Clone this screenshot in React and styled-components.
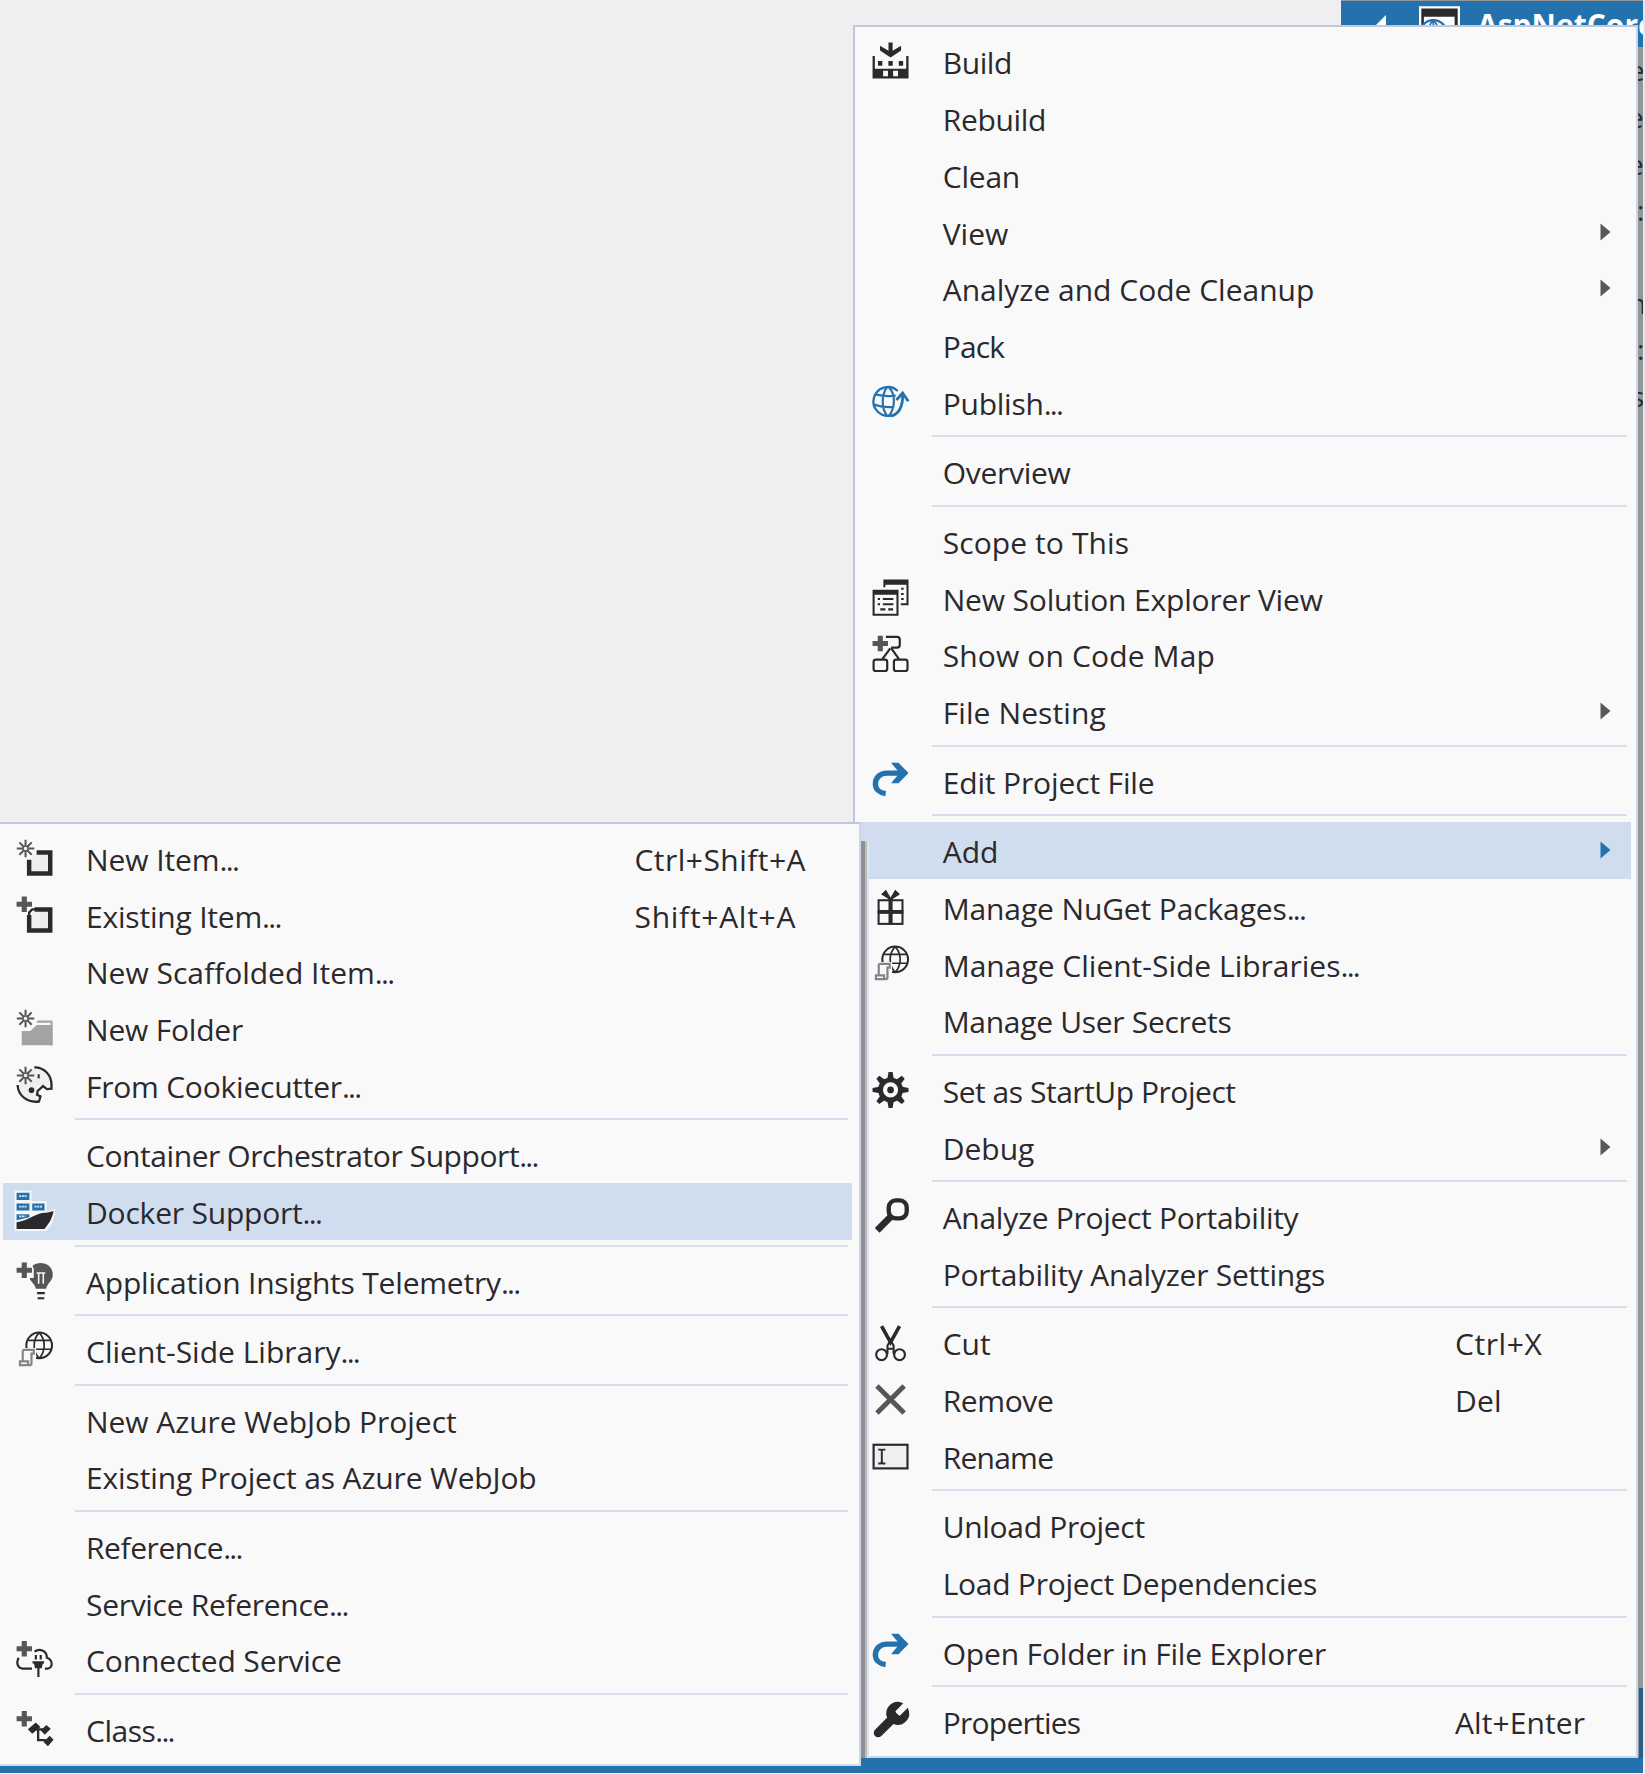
import React from "react";
import styled, { createGlobalStyle } from "styled-components";

const ROW = 56.75;
const INK = "#2b292c";
const GREY = "#565557";
const BLUE = "#2372ae";
const PANEL = "#f9f9fa";

const GlobalStyle = createGlobalStyle`
  * { box-sizing: border-box; }
  body { margin: 0; background: #fff; }
`;

const Desktop = styled.main`
  position: relative;
  width: 1645px;
  height: 1774px;
  overflow: hidden;
  background: #efeff1;
  font-family: "Open Sans", "Noto Sans", sans-serif;
  color: ${INK};
`;

const Explorer = styled.aside`
  position: absolute;
  left: 1341px;
  top: 0;
  width: 304px;
  height: 1757px;
  padding-top: 1px;
  background: #959596;
  border-right: 2px solid #e4e8ee;
  overflow: hidden;
`;

const ProjectRow = styled.div`
  display: flex;
  align-items: flex-start;
  height: 46px;
  padding-left: 29px;
  background: ${BLUE};
  color: #fff;
  font-size: 30px;
  font-weight: 700;
  line-height: 46px;
  white-space: nowrap;
`;

const ProjectName = styled.span`
  margin: 1px 0 0 17px;
`;

const Expander = styled.svg`
  flex: none;
  width: 14px;
  height: 14px;
  margin: 13px 32px 0 3px;
`;

const ProjectIcon = styled.svg`
  flex: none;
  width: 41px;
  height: 41px;
  margin-top: 4px;
`;

const TreeRow = styled.div`
  height: ${(p) => p.$h}px;
  padding-left: ${(p) => p.$indent}px;
  font-size: 28px;
  line-height: 47px;
  white-space: nowrap;
`;

const StatusBar = styled.footer`
  position: absolute;
  left: 0;
  top: 1757px;
  width: 1643px;
  height: 16px;
  background: ${BLUE};
`;

const StatusEdge = styled.div`
  position: absolute;
  left: 1639px;
  top: 1688px;
  width: 4px;
  height: 70px;
  background: #275f8c;
`;

const Menu = styled.nav`
  position: absolute;
  display: flex;
  flex-direction: column;
  background: ${PANEL};
  border: 2px solid #bdcadb;
`;

const ProjectMenu = styled(Menu)`
  left: 853px;
  top: 25px;
  width: 785px;
  height: 1733px;
  padding: 6.3px 5px 0 1px;
  border-right: 2px solid #cbd7e8;
  border-bottom-color: #cbd7e8;
`;

const AddMenu = styled(Menu)`
  left: 0;
  top: 822px;
  width: 861px;
  height: 944px;
  padding: 5.8px 7px 0 3px;
  border-left: 0;
  border-right: 2px solid #cbd7e8;
  border-bottom-color: #d5deea;
`;

const MenuShadow = styled.div`
  position: absolute;
  left: 860px;
  top: 841px;
  width: 9px;
  height: 917px;
  border-radius: 0 5px 0 0;
  background: linear-gradient(90deg, #8f8f90 0 5px, #b9bcc0 5px 7px, #dbe3ee 7px 9px);
`;

const Row = styled.div`
  display: flex;
  align-items: flex-start;
  flex: none;
  height: ${ROW}px;
  padding-left: ${(p) => (p.$sub ? 10.5 : 14.4)}px;
  background: ${(p) => (p.$active ? "#d0ddee" : "transparent")};
`;

const IconSlot = styled.span`
  flex: none;
  width: ${(p) => (p.$sub ? 72.5 : 72.3)}px;
  height: 41.1px;
  padding-top: 7.2px;
`;

const Glyph = styled.svg`
  display: block;
  width: 41.1px;
  height: 41.1px;
  overflow: visible;
`;

const Label = styled.span`
  flex: none;
  width: ${(p) => (p.$sub ? 548.5 : 512.3)}px;
  font-size: 30px;
  line-height: ${ROW + 4}px;
  letter-spacing: ${(p) => p.$track || 0}px;
  white-space: nowrap;
`;

const Dots = styled.span`
  letter-spacing: -1.7px;
`;

const Shortcut = styled.span`
  flex: 1;
  font-size: 30px;
  line-height: ${ROW + 4}px;
  letter-spacing: ${(p) => p.$track || 0}px;
  white-space: nowrap;
`;

const Arrow = styled.svg`
  flex: none;
  width: 11px;
  height: 18px;
  margin: 19px 20.5px 0 auto;
`;

const Divider = styled.hr`
  flex: none;
  height: 2px;
  margin: 4.75px 4px 6px ${(p) => (p.$sub ? 72 : 76)}px;
  border: 0;
  background: #d5dfee;
`;

const Plus = ({ y = 4 }) => (
  <path d={`M3 ${y - 3}h2v2h2v2H5v2H3v-2H1v-2h2z`} fill={GREY} />
);

const Spark = () => (
  <g stroke={GREY} strokeWidth="0.8">
    <path d="M4.5 1.1v2.3M4.5 5.6v2.3M1.1 4.5h2.3M5.6 4.5h2.3M2.1 2.1l1.6 1.6M5.3 5.3l1.6 1.6M6.9 2.1L5.3 3.7M3.7 5.3L2.1 6.9" />
    <circle cx="4.5" cy="4.5" r="1" fill="none" strokeWidth="0.6" />
  </g>
);

const redo = (
  <g fill="none" stroke={BLUE}>
    <path d="M13.2 5.1H6.6C3.8 5.1 2.1 7 2.1 9.3c0 2 1.6 3.5 4 3.8" strokeWidth="2.1" />
    <path d="M8.2 1.1h2.9L15 5.1l-3.9 4H8.2l3.3-4z" fill={BLUE} stroke="none" />
  </g>
);

const library = (
  <g fill="none">
    <circle cx="9.8" cy="6.4" r="5" stroke={INK} strokeWidth="0.8" />
    <path d="M5.5 4.4h8.6M4.8 7.9h10M9.8 1.4c-2.6 2.8-2.6 7.2 0 10M9.8 1.4c2.6 2.8 2.6 7.2 0 10" stroke={INK} strokeWidth="0.65" />
    <path d="M1.3 7.4h7.3v5H8v2.5H1.3z" fill={PANEL} />
    <path d="M3.4 12.6V8.7q0-.6.6-.6h3.7v1.5h-.9v3.7q0 .8-.8.8H2.3v-1.5h3.2v1" stroke="#858587" strokeWidth="0.85" />
  </g>
);

const ICONS = {
  build: (
    <g fill={INK}>
      <path d="M7.2 1h1.6v3.2L12.1 2.2v1.9L8 6.8 3.9 4.1V2.2l3.3 2z" />
      <path fillRule="evenodd" d="M1 6.2h.9v5h12.2v-5h.9V15H1zM5.1 12v2.1h1.9V12zM9 12v2.1h1.9V12z" />
      <path d="M3.1 8.2h1.7v1.8H3.1zM7.15 8.2h1.7v1.8h-1.7zM11.2 8.2h1.7v1.8h-1.7z" />
    </g>
  ),
  publish: (
    <g fill="none" stroke={BLUE} strokeWidth="0.9">
      <path d="M10.8 3.9A5.6 5.6 0 1 0 8.3 13.4" />
      <path d="M6.6 2.4C4.4 5.6 4.4 10.4 6.6 13.6M7.4 2.4c1.3 1.4 1.9 3.3 1.9 5.3 0 2.2-.6 4.3-1.9 5.9M2.2 5.2q3.5 1 7.8.5M1.6 9.2q4 1.3 7.8.9" strokeWidth="0.85" />
      <path d="M8 13.6c2.9-.4 4.9-3.3 4.7-8.4" strokeWidth="1.1" />
      <path d="M10.3 7.4L12.7 4.7 14.9 7.9" strokeWidth="1.1" />
    </g>
  ),
  solution: (
    <g fill={INK}>
      <path d="M5.2 1H15v10h-3v-.8h2.2V3H6v1h-.8z" />
      <path fillRule="evenodd" d="M1 5h10.1v10.1H1zM1.8 6.9v7.4h8.5V6.9z" />
      <path d="M3 8.2h.9v.8H3zM5 8.2h4.1v.8H5zM3 10.2h.9v.8H3zM5 10.2h4.1v.8H5zM4 12.2h2v.8H4zM7.1 12.2h1.9v.8H7.1zM12.1 4.2h1v.8h-1zM12.1 6.2h1V7h-1zM12.1 8.2h1V9h-1z" />
    </g>
  ),
  codemap: (
    <g>
      <Plus y={4.1} />
      <g fill="none" stroke={INK} strokeWidth="0.85">
        <path d="M6.2 1.5h4.3q1.1 0 1.1 1.1v2q0 1.1-1.1 1.1H8.2M7.9 6L4.8 10.2M8.3 6l3 4.2" />
        <rect x="1.4" y="10.4" width="5.3" height="4.4" rx="0.9" />
        <rect x="9.3" y="10.4" width="5.3" height="4.4" rx="0.9" />
      </g>
    </g>
  ),
  redo,
  gift: (
    <g fill="none" stroke={INK}>
      <rect x="3.35" y="5.55" width="9.3" height="9.2" strokeWidth="0.8" />
      <path d="M8 5v10" strokeWidth="1.6" />
      <path d="M3 10.1h10" strokeWidth="1.5" />
      <path d="M4.3 3.2l1.9-1.7L8 4.5l1.8-3 1.9 1.7L8.5 5.3h-1z" fill={INK} stroke="none" />
    </g>
  ),
  library,
  gear: (
    <g transform="translate(0 .15)">
      {[0, 45, 90, 135, 180, 225, 270, 315].map((a) => (
        <path key={a} d="M6.7 4L7.2 1h1.6l.5 3z" fill={INK} transform={`rotate(${a} 8 8)`} />
      ))}
      <circle cx="8" cy="8" r="3.9" fill="none" stroke={INK} strokeWidth="1.9" />
      <circle cx="8" cy="8" r="1.3" fill={INK} />
    </g>
  ),
  search: (
    <g fill="none" stroke={INK}>
      <path d="M2.8 13.8L8 8.5" strokeWidth="2.6" />
      <rect x="7.3" y="2.1" width="7" height="7" rx="2.7" strokeWidth="1.7" />
    </g>
  ),
  cut: (
    <g fill="none" stroke={INK}>
      <path d="M4.5 2L8 8.3l3.5-6.3" strokeWidth="1.4" />
      <path d="M8 7.6l-1.2 2v1.2h2.4V9.6zM6.8 10.8v2M9.2 10.8v2" strokeWidth="0.8" />
      <circle cx="4.5" cy="13.1" r="2.1" strokeWidth="0.85" />
      <circle cx="11.5" cy="13.1" r="2.1" strokeWidth="0.85" />
    </g>
  ),
  remove: <path d="M2.7 3.1l10.6 10.5M13.3 3.1L2.7 13.6" stroke={GREY} strokeWidth="1.9" />,
  rename: (
    <g>
      <rect x="1.4" y="3.8" width="13.2" height="9.2" fill="#efeff1" stroke={INK} strokeWidth="0.85" />
      <path d="M3.2 5.7h1l.4.5.4-.5h1M3.2 11.1h1l.4-.5.4.5h1M4.6 6.1v4.6" fill="none" stroke={INK} strokeWidth="0.75" />
    </g>
  ),
  wrench: (
    <path
      transform="translate(-.4 -.4) scale(.7)"
      fill={INK}
      stroke={INK}
      strokeWidth="0.7"
      d="M14.7 6.3a1 1 0 0 0 0 1.4l1.6 1.6a1 1 0 0 0 1.4 0l3.77-3.77a6 6 0 0 1-7.94 7.94l-6.91 6.91a2.12 2.12 0 0 1-3-3l6.91-6.91a6 6 0 0 1 7.94-7.94l-3.76 3.76z"
    />
  ),
  newItem: (
    <g>
      <path d="M7 7h6v6.5H7z" fill="#efeff1" />
      <path d="M8.8 6h5.3v8.2H5.9V8.9" fill="none" stroke={INK} strokeWidth="1.75" />
      <Spark />
    </g>
  ),
  existingItem: (
    <g>
      <path d="M7 7h6v6.5H7z" fill="#efeff1" />
      <path d="M8 6h6.1v8.2H5.9V8.2" fill="none" stroke={INK} strokeWidth="1.75" />
      <path d="M5.9 8.4V7.2L7.1 6h1.2" fill="none" stroke={INK} strokeWidth="0.9" />
      <Plus />
    </g>
  ),
  folder: (
    <g>
      <path d="M3 9.3h3.4L8.8 7H15v7.9H3z" fill="#a3a3a5" />
      <path d="M9 5.7h5.6V15" fill="none" stroke="#a3a3a5" strokeWidth="0.8" />
      <Spark />
    </g>
  ),
  cookie: (
    <g>
      <circle cx="8" cy="8" r="6" fill="#efeff1" />
      <path d="M8.9 8.4h6.3V15H8.9z" fill={PANEL} />
      <path d="M7.9 1.3c3.8-.1 6.9 3 6.7 7.3v1l-1.8.2-1.5-1.2-2.1 1.9-.2 1.5 1.3.6-.6 2C5.3 15.2 1.6 12.4 1.4 8.2" fill="none" stroke={INK} strokeWidth="0.9" />
      <path d="M9.2 4h.8v1.6h-.8z" fill={INK} />
      <circle cx="6.8" cy="10.2" r="1.1" fill={INK} />
      <Spark />
    </g>
  ),
  docker: (
    <g>
      <path d="M.2.3h6.6v4h5.9v4.2l3.4-1.1c-.2 3.4-1.2 6.4-3.7 8.6H.2z" fill="#f5f6f8" />
      <path d="M1 1.1h5v2.8H1zM1 5.3h5V8H1zM7.1 5.3h4.8V8H7.1zM1 9.4h5v1.2l-5 1.2z" fill={BLUE} />
      <path d="M2 2.4h3M2 6.5h3M8 6.5h3M2 10.3h2.4" stroke="#dbe7f2" strokeWidth="0.7" strokeDasharray=".8 .25" />
      <path d="M1 15.2v-2.6c4-.5 6.8-3 10-3.6 1.5-.1 3-.3 4.4-.8-.1 1.3-.8 2.9-1.4 4.1L11.9 15.2z" fill={INK} />
    </g>
  ),
  insights: (
    <g>
      <path d="M10.4 1.2c2.8 0 4.7 2 4.7 4.5 0 2.4-2.2 3.3-2.6 5.5H8.5C8.2 9.3 6.2 8.2 6.1 7h1.6V3.4L7.2 2.3c.8-.7 2-1.1 3.2-1.1z" fill={GREY} />
      <path d="M8.8 5.1h3.4M9.6 5v4.2M11.4 5v4.2" stroke={PANEL} strokeWidth="0.6" fill="none" />
      <path d="M9 12.9h3M9.2 14.9h2.6" stroke={INK} strokeWidth="0.8" />
      <Plus />
    </g>
  ),
  connected: (
    <g>
      <Plus y={4.2} />
      <g fill="none" stroke={INK} strokeWidth="0.85">
        <path d="M1.8 7.7C.7 9.8 1.5 11.9 3.4 11.9H7M12 11.9h1c2.2 0 2.3-3.4-.2-4.2C12.8 4.6 9.7 4 8 5.3" />
        <path d="M8.5 6.6v1.8M10.4 6.6v1.8M7.2 9.5h4.5M9.5 10v5.2" />
        <path d="M7.7 9.6h3.6l-.5 2.2H8.2z" fill={INK} stroke="none" />
      </g>
    </g>
  ),
  classes: (
    <g fill={INK}>
      <Plus y={4.2} />
      <path d="M8.5 5.6L10.3 7.4 7.1 10 5.4 8.3zM12.6 6.6l1.7 1.5-2.3 2.3-1.6-1.6zM13.9 10.8l1.5 1.6-2.2 2.5-1.7-1.7z" />
      <path d="M8 8.3h3.6M9.4 8.3v4.2h3" fill="none" stroke={INK} strokeWidth="0.9" />
    </g>
  ),
};

const PROJECT_ITEMS = [
  { label: "Build", icon: "build", track: -0.4 },
  { label: "Rebuild", track: -0.32 },
  { label: "Clean", track: -0.2 },
  { label: "View", more: true },
  { label: "Analyze and Code Cleanup", more: true },
  { label: "Pack", track: -0.8 },
  { label: "Publish...", icon: "publish", track: -0.24 },
  null,
  { label: "Overview", track: -0.28 },
  null,
  { label: "Scope to This", track: 0.09 },
  { label: "New Solution Explorer View", icon: "solution", track: -0.17 },
  { label: "Show on Code Map", icon: "codemap", track: 0.14 },
  { label: "File Nesting", more: true, track: 0.1 },
  null,
  { label: "Edit Project File", icon: "redo", track: -0.14 },
  null,
  { label: "Add", more: true, active: true },
  { label: "Manage NuGet Packages...", icon: "gift", track: -0.13 },
  { label: "Manage Client-Side Libraries...", icon: "library" },
  { label: "Manage User Secrets", track: -0.3 },
  null,
  { label: "Set as StartUp Project", icon: "gear", track: -0.47 },
  { label: "Debug", more: true },
  null,
  { label: "Analyze Project Portability", icon: "search", track: -0.29 },
  { label: "Portability Analyzer Settings", track: -0.23 },
  null,
  { label: "Cut", icon: "cut", keys: "Ctrl+X", keysTrack: 0.57 },
  { label: "Remove", icon: "remove", track: -0.38, keys: "Del", keysTrack: 0.2 },
  { label: "Rename", icon: "rename", track: -0.75 },
  null,
  { label: "Unload Project", track: -0.32 },
  { label: "Load Project Dependencies", track: -0.27 },
  null,
  { label: "Open Folder in File Explorer", icon: "redo", track: -0.16 },
  null,
  { label: "Properties", icon: "wrench", track: -0.75, keys: "Alt+Enter", keysTrack: 0.1 },
];

const ADD_ITEMS = [
  { label: "New Item...", icon: "newItem", track: -0.08, keys: "Ctrl+Shift+A", keysTrack: 0.47 },
  { label: "Existing Item...", icon: "existingItem", track: -0.2, keys: "Shift+Alt+A", keysTrack: 0.72 },
  { label: "New Scaffolded Item..." },
  { label: "New Folder", icon: "folder", track: -0.2 },
  { label: "From Cookiecutter...", icon: "cookie", track: -0.23 },
  null,
  { label: "Container Orchestrator Support...", track: -0.43 },
  { label: "Docker Support...", icon: "docker", active: true, track: -0.2 },
  null,
  { label: "Application Insights Telemetry...", icon: "insights", track: -0.2 },
  null,
  { label: "Client-Side Library...", icon: "library" },
  null,
  { label: "New Azure WebJob Project", track: -0.05 },
  { label: "Existing Project as Azure WebJob", track: -0.14 },
  null,
  { label: "Reference...", track: -0.43 },
  { label: "Service Reference...", track: -0.3 },
  { label: "Connected Service", icon: "connected", track: -0.13 },
  null,
  { label: "Class...", icon: "classes", track: -0.5 },
];

function LabelText({ text }) {
  if (!text.endsWith("...")) return text;
  return <>{text.slice(0, -3)}<Dots>...</Dots></>;
}

function Items({ items, sub }) {
  return items.map((item, i) =>
    item ? (
      <Row key={i} $sub={sub} $active={item.active}>
        <IconSlot $sub={sub}>
          {item.icon && <Glyph viewBox="0 0 16 16">{ICONS[item.icon]}</Glyph>}
        </IconSlot>
        <Label $sub={sub} $track={item.track}><LabelText text={item.label} /></Label>
        {item.keys && <Shortcut $track={item.keysTrack}>{item.keys}</Shortcut>}
        {item.more && (
          <Arrow viewBox="0 0 11 18">
            <path d="M.5.5L10.5 9 .5 17.5z" fill={item.active ? BLUE : "#59595b"} />
          </Arrow>
        )}
      </Row>
    ) : (
      <Divider key={i} $sub={sub} />
    )
  );
}

const TREE = [
  { text: "e", h: 47, indent: 288 },
  { text: "e", h: 46.5, indent: 287 },
  { text: "e", h: 46.5, indent: 287 },
  { text: ":", h: 92.5, indent: 296 },
  { text: "n", h: 46.5, indent: 288 },
  { text: ":", h: 46.5, indent: 296 },
  { text: "s", h: 46.5, indent: 290 },
];

export default function App() {
  return (
    <Desktop>
      <GlobalStyle />
      <Explorer>
        <ProjectRow>
          <Expander viewBox="0 0 14 14"><path d="M13 1v13H0z" fill="#fff" /></Expander>
          <ProjectIcon viewBox="0 0 16 16">
            <path d="M0 .5h16v15H0z" fill="#fff" />
            <path d="M.9 1.4h14.2V15h-1.2V4.6H1.9V15h-1z" fill={INK} />
            <circle cx="5.6" cy="11.2" r="5.3" fill="#fff" stroke={BLUE} strokeWidth="0.9" />
            <path d="M5.6 6v10M5.6 6c-2.5 2-2.5 7 0 10M5.6 6c2.5 2 2.5 7 0 10" fill="none" stroke={BLUE} strokeWidth="0.7" />
          </ProjectIcon>
          <ProjectName>AspNetCore</ProjectName>
        </ProjectRow>
        {TREE.map((row, i) => (
          <TreeRow key={i} $h={row.h} $indent={row.indent}>{row.text}</TreeRow>
        ))}
      </Explorer>
      <StatusBar />
      <StatusEdge />
      <ProjectMenu>
        <Items items={PROJECT_ITEMS} />
      </ProjectMenu>
      <MenuShadow />
      <AddMenu>
        <Items items={ADD_ITEMS} sub />
      </AddMenu>
    </Desktop>
  );
}
